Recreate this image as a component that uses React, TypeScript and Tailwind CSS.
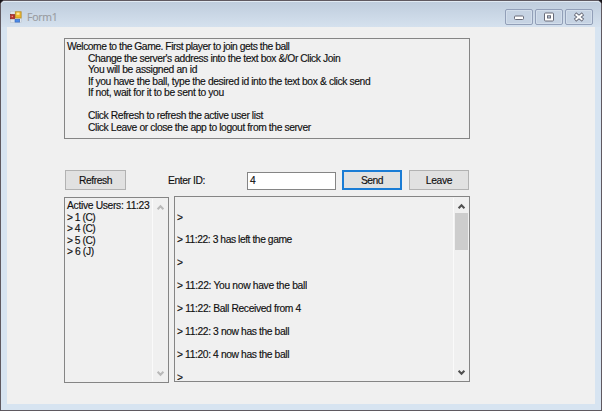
import React from 'react';

type Line = { text: string; className?: string };

const instructions: Line[] = [
  { text: 'Welcome to the Game. First player to join gets the ball', className: 'tracking-[-0.46px]' },
  { text: "Change the server's address into the text box &/Or Click Join", className: 'pl-[21px] tracking-[-0.42px]' },
  { text: 'You will be assigned an id', className: 'pl-[21px] tracking-[-0.35px]' },
  { text: 'If you have the ball, type the desired id into the text box & click send', className: 'pl-[21px] tracking-[-0.38px]' },
  { text: 'If not, wait for it to be sent to you', className: 'pl-[21px] tracking-[-0.35px]' },
  { text: '' },
  { text: 'Click Refresh to refresh the active user list', className: 'pl-[21px] tracking-[-0.4px]' },
  { text: 'Click Leave or close the app to logout from the server', className: 'pl-[21px] tracking-[-0.39px]' },
];

const users: Line[] = [
  { text: 'Active Users: 11:23', className: 'tracking-[-0.32px]' },
  { text: '> 1 (C)', className: 'tracking-[-0.5px]' },
  { text: '> 4 (C)', className: 'tracking-[-0.5px]' },
  { text: '> 5 (C)', className: 'tracking-[-0.5px]' },
  { text: '> 6 (J)', className: 'tracking-[-0.4px]' },
];

const log: Line[] = [
  { text: '>' },
  { text: '> 11:22: 3 has left the game', className: 'tracking-[-0.44px]' },
  { text: '>' },
  { text: '> 11:22: You now have the ball', className: 'tracking-[-0.33px]' },
  { text: '> 11:22: Ball Received from 4', className: 'tracking-[-0.37px]' },
  { text: '> 11:22: 3 now has the ball', className: 'tracking-[-0.39px]' },
  { text: '> 11:20: 4 now has the ball', className: 'tracking-[-0.39px]' },
  { text: '>' },
];

function Lines({ items, row }: { items: Line[]; row: string }) {
  return (
    <>
      {items.map((line, i) => (
        <div key={i} className={`${row} whitespace-pre`}>
          <span className={line.className}>{line.text}</span>
        </div>
      ))}
    </>
  );
}

function Chevron({ down, color }: { down?: boolean; color: string }) {
  return (
    <svg width="9" height="7" viewBox="0 0 9 7" className={down ? 'rotate-180' : ''}>
      <path d="M1.6 5.3 4.5 2.3 7.4 5.3" fill="none" stroke={color} strokeWidth="2" />
    </svg>
  );
}

function CaptionButton({ children }: { children: React.ReactNode }) {
  return (
    <div className="flex h-4 w-7 items-center justify-center rounded-[2px] border border-[#929fb8] bg-[#c6d3e3] shadow-[inset_0_0_0_1px_#d3deeb]">
      {children}
    </div>
  );
}

export default function App() {
  return (
    <div className="h-[411px] w-[602px] overflow-hidden bg-[#161318] font-['Liberation_Sans',Arial,sans-serif] text-[10.3px] leading-[11.5px] text-[#111] [-webkit-text-stroke:0.15px_#111]">
      <div className="flex h-full w-full flex-col rounded-t-[5px] border border-[#5f5960] bg-[#d7e4f1] px-[6px] pb-[6px]">
        <header className="-mx-[6px] flex h-[26px] shrink-0 items-start rounded-t-[4px] border-t border-[#e1eaf3] bg-gradient-to-b from-[#bfcddd] to-[#d5e1ee] pl-[9px] pr-[8px]">
          <svg width="12" height="12" viewBox="0 0 12 12" className="mt-[9px]">
            <rect x="0.3" y="0.5" width="11" height="11" fill="#dfe5ec" stroke="#b9c1cb" strokeWidth=".5" />
            <rect x="5.3" y="0.8" width="5.8" height="6.2" fill="#f0b92f" stroke="#b58a20" strokeWidth=".8" />
            <rect x="6.6" y="1.6" width="2.8" height="2.2" fill="#ffe89a" />
            <rect x="0.6" y="3.6" width="4" height="4.2" fill="#b92f2a" stroke="#8e211d" strokeWidth=".7" />
            <rect x="1.6" y="4.8" width="1.4" height="1.4" fill="#ea8b80" />
            <rect x="5" y="8.3" width="4.7" height="2.8" fill="#4c8ae8" stroke="#3566bb" strokeWidth=".6" />
          </svg>
          <span className="ml-[5px] mt-[8px] font-['Open_Sans',sans-serif] text-[10.5px] leading-[14px] tracking-[-0.25px] text-[#999b9f] [-webkit-text-stroke:0.15px_#999b9f]">Form1</span>
          <div className="ml-auto mt-[7px] flex gap-[2px]">
            <CaptionButton>
              <svg width="12" height="8" viewBox="0 0 12 8">
                <rect x="1.5" y="3" width="9" height="3.5" rx="1" fill="#fff" stroke="#686b78" />
              </svg>
            </CaptionButton>
            <CaptionButton>
              <svg width="12" height="10" viewBox="0 0 12 10">
                <rect x="1.5" y="1" width="9" height="8" rx="1" fill="#fff" stroke="#686b78" />
                <rect x="4.5" y="3.8" width="3" height="2.2" fill="#c6d3e3" stroke="#686b78" />
              </svg>
            </CaptionButton>
            <CaptionButton>
              <svg width="12" height="10" viewBox="0 0 12 10">
                <path d="M2 1.8 10 8.2M10 1.8 2 8.2" stroke="#686b78" strokeWidth="3.7" />
                <path d="M2.6 2.3 9.4 7.7M9.4 2.3 2.6 7.7" stroke="#fff" strokeWidth="1.9" />
              </svg>
            </CaptionButton>
          </div>
        </header>

        <main className="flex-1 overflow-hidden bg-[#f0f0f0] pl-[57px] pt-[11px]">
          <section className="h-[101px] w-[406px] border border-[#858585] pl-[2px] pt-[2px]">
            <Lines items={instructions} row="h-[11.5px]" />
          </section>

          <div className="mt-[31px] flex h-[20px] pl-[1px]">
            <button className="h-[20px] w-[61px] border border-[#b2b2b2] bg-[#e1e1e1] pt-px">
              <span className="tracking-[-0.45px]">Refresh</span>
            </button>
            <label className="ml-[42px] w-[79px] pt-[5px]">
              <span className="tracking-[-0.4px]">Enter ID:</span>
            </label>
            <div className="mt-[2px] h-[18px] w-[89px] border border-[#858585] bg-white pl-[2px] pt-[2px]">4</div>
            <button className="ml-[6px] h-[20px] w-[60px] border-2 border-[#1a7cd5] bg-[#e1e1e1] pt-px">
              <span className="tracking-[-0.45px]">Send</span>
            </button>
            <button className="ml-[7px] h-[20px] w-[60px] border border-[#b2b2b2] bg-[#e1e1e1] pt-px">
              <span className="tracking-[-0.35px]">Leave</span>
            </button>
          </div>

          <div className="mt-[6px] flex">
            <section className="mt-[1px] flex h-[186px] w-[105px] justify-between border border-[#858585] p-[1px]">
              <div className="pl-[1px] pt-[1px]">
                <Lines items={users} row="h-[11.5px]" />
              </div>
              <div className="flex w-[15px] shrink-0 flex-col items-center justify-between border-l border-[#fafafa] pb-[4px] pt-[5px]">
                <Chevron color="#b9b9b9" />
                <Chevron down color="#b9b9b9" />
              </div>
            </section>
            <section className="ml-[5px] flex h-[186px] w-[296px] justify-between border border-[#858585] p-[1px]">
              <div className="h-[182px] overflow-hidden pl-[1px] pt-[13.5px]">
                <Lines items={log} row="h-[22.9px]" />
              </div>
              <div className="flex w-[15px] shrink-0 flex-col items-center border-l border-[#fafafa] pb-[4px] pt-[5px]">
                <Chevron color="#505050" />
                <div className="mt-[3px] h-[37px] w-[13px] bg-[#cdcdcd]" />
                <div className="mt-auto flex">
                  <Chevron down color="#505050" />
                </div>
              </div>
            </section>
          </div>
        </main>
      </div>
    </div>
  );
}
